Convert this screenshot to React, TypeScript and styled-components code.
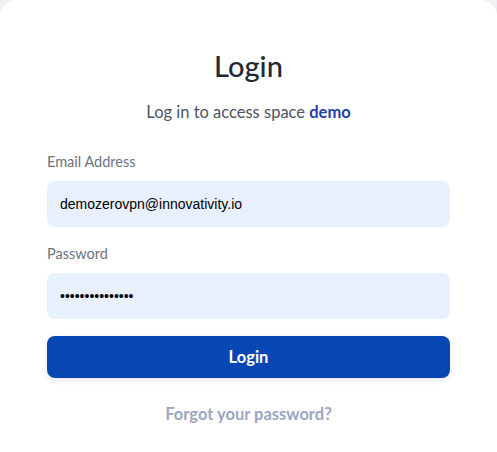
import styled, { createGlobalStyle } from 'styled-components';

const GlobalStyle = createGlobalStyle`
  body {
    margin: 0;
    background: #eef0f4;
    font-family: Lato, "Noto Sans", sans-serif;
  }
`;

const Card = styled.div`
  background: #fff;
  border-radius: 16px 16px 0 0;
  min-height: 100vh;
  padding: 46px 47px 0;
  box-sizing: border-box;
  display: flex;
  flex-direction: column;
`;

const Title = styled.h1`
  margin: 0;
  text-align: center;
  font-size: 29px;
  font-weight: 500;
  line-height: 40px;
  color: #1f2937;
`;

const Subtitle = styled.p`
  margin: 16px 0 0;
  text-align: center;
  font-size: 16.5px;
  line-height: 20px;
  color: #4b5563;

  strong {
    color: #1e40af;
    font-weight: 700;
  }
`;

const Form = styled.form`
  display: flex;
  flex-direction: column;
  margin-top: 30px;
`;

const Label = styled.label`
  font-size: 14.5px;
  line-height: 20px;
  color: #6b7280;
  margin-bottom: 9px;
`;

const Input = styled.input`
  height: 46px;
  border: none;
  border-radius: 8px;
  background: #e8f0fe;
  padding: 0 13px;
  font-family: Arial, "Liberation Sans", sans-serif;
  font-size: 14px;
  color: #000;
  outline: none;
  margin-bottom: 17px;
`;

const Button = styled.button`
  height: 42px;
  border: none;
  border-radius: 8px;
  background: #0747b3;
  color: #fff;
  font-family: Lato, "Noto Sans", sans-serif;
  font-size: 16.5px;
  font-weight: 700;
  box-shadow: 0 2px 6px rgba(15, 40, 90, 0.12);
  cursor: pointer;
`;

const Forgot = styled.a`
  margin-top: 26px;
  text-align: center;
  font-size: 16.5px;
  font-weight: 700;
  line-height: 20px;
  color: #9aa6c2;
  text-decoration: none;
`;

export default function App() {
  return (
    <>
      <GlobalStyle />
      <Card>
        <Title>Login</Title>
        <Subtitle>
          Log in to access space <strong>demo</strong>
        </Subtitle>
        <Form onSubmit={e => e.preventDefault()}>
          <Label htmlFor="email">Email Address</Label>
          <Input id="email" type="email" defaultValue="demozerovpn@innovativity.io" />
          <Label htmlFor="password">Password</Label>
          <Input id="password" type="password" defaultValue="passwordpasswor" />
          <Button type="submit">Login</Button>
          <Forgot href="#">Forgot your password?</Forgot>
        </Form>
      </Card>
    </>
  );
}
